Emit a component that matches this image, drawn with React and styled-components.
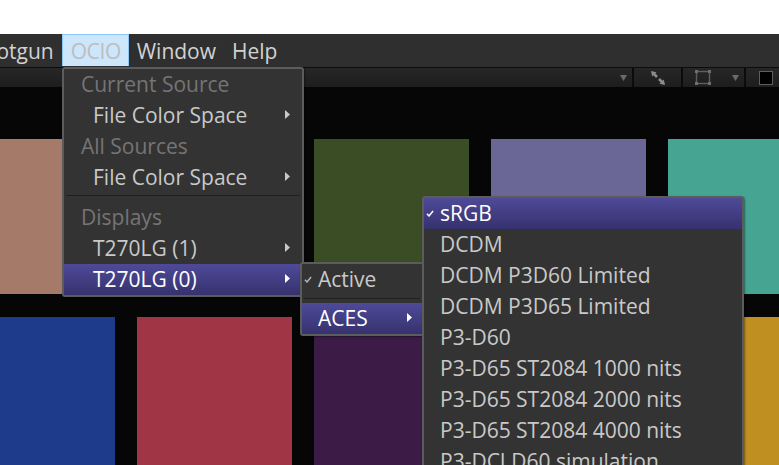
import React from "react";
import styled, { createGlobalStyle } from "styled-components";

const Global = createGlobalStyle`
  html, body { margin: 0; padding: 0; background: #fff; overflow: hidden; }
  #root { width: 779px; height: 465px; overflow: hidden; }
`;

const FONT = `"Open Sans", "Noto Sans", "Liberation Sans", sans-serif`;

const Page = styled.div`
  position: relative;
  width: 779px;
  height: 465px;
  overflow: hidden;
  padding-top: 34px;
  box-sizing: border-box;
  font-family: ${FONT};
  display: flex;
  flex-direction: column;
`;

const MenuBar = styled.div`
  height: 33px;
  flex: none;
  display: flex;
  align-items: stretch;
  background: #2f2f2f;
  border-bottom: 1px solid #0c0c0c;
  margin-left: -36px;
`;

const BarItem = styled.div`
  padding: 0 7px;
  font-size: 21px;
  line-height: 32px;
  color: ${(p) => (p.$open ? "#bdbdbd" : "#d2d2d2")};
  background: ${(p) => (p.$open ? "#cce6fb" : "transparent")};
  border: 1px solid ${(p) => (p.$open ? "#8fc6f4" : "transparent")};
  border-bottom: none;
  box-sizing: border-box;
  height: 32px;
  ${(p) => p.$open && "width: 67px; padding: 0 0 0 8px; letter-spacing: -0.4px;"}
`;

const Toolbar = styled.div`
  height: 19px;
  flex: none;
  display: flex;
  gap: 2px;
  background: #0b0b0b;
  justify-content: flex-end;
`;

const ToolCell = styled.div`
  width: ${(p) => p.$w}px;
  flex: ${(p) => (p.$grow ? "1" : "none")};
  background: linear-gradient(#272727, #1d1d1d);
  display: flex;
  align-items: center;
  justify-content: ${(p) => p.$justify || "center"};
  padding: 0 ${(p) => p.$right || 0}px 0 ${(p) => p.$left || 0}px;
  box-sizing: border-box;
`;

const Canvas = styled.div`
  flex: 1;
  background: #060606;
  padding: 52px 0 0;
  overflow: hidden;
`;

const Swatches = styled.div`
  display: grid;
  grid-template-columns: repeat(5, 155px);
  grid-auto-rows: 155px;
  column-gap: 22px;
  row-gap: 23px;
  margin-left: -40px;
  width: 900px;
`;

const Swatch = styled.div`
  background: ${(p) => p.$c};
`;

const Menu = styled.div`
  position: absolute;
  left: ${(p) => p.$x}px;
  top: ${(p) => p.$y}px;
  width: ${(p) => p.$w}px;
  box-sizing: border-box;
  background: #333333;
  border: 2px solid #5c5c5c;
  border-radius: 3px;
  box-shadow: 1px 1px 2px rgba(0, 0, 0, 0.4);
`;

const Row = styled.div`
  position: relative;
  height: 31px;
  line-height: 31px;
  font-size: 21px;
  white-space: nowrap;
  padding-left: ${(p) => p.$indent}px;
  color: ${(p) => (p.$dim ? "#757575" : p.$active ? "#ffffff" : "#c9c9c9")};
  background: ${(p) =>
    p.$active ? "linear-gradient(#4e4a98, #36326e)" : "transparent"};
`;

const Arrow = styled.span`
  position: absolute;
  right: ${(p) => p.$r}px;
  top: 10px;
  width: 5px;
  height: 9px;
  background: ${(p) => (p.$active ? "#fff" : "#c9c9c9")};
  clip-path: polygon(0 0, 100% 50%, 0 100%);
`;

const Check = styled.svg`
  position: absolute;
  left: 2px;
  top: 12px;
  width: 8px;
  height: 7px;
`;

const Separator = styled.div`
  height: 1px;
  background: #1f1f1f;
  margin: ${(p) => p.$m};
`;

const Tick = ({ color }) => (
  <Check viewBox="0 0 9 8">
    <path d="M1 4.2 L3.4 6.8 L8 1.2" fill="none" stroke={color} strokeWidth="1.7" />
  </Check>
);

const DropDown = () => (
  <svg width="7" height="6" viewBox="0 0 7 6">
    <path d="M0 0h7L3.5 6z" fill="#6a6a6a" />
  </svg>
);

const Expand = () => (
  <svg width="14" height="14" viewBox="0 0 14 14">
    <path d="M0 0l5.5 1.2L1.2 5.5zM14 14l-5.5-1.2 4.3-4.3z" fill="#8c8c8c" />
    <path d="M3 3l3 3M8 8l3 3" stroke="#8c8c8c" strokeWidth="2.6" />
  </svg>
);

const Frame = () => (
  <svg width="16" height="15" viewBox="0 0 16 15">
    <rect x="1.5" y="1.5" width="13" height="12" fill="none" stroke="#5e5e5e" strokeWidth="1.4" />
    <path d="M0 0h3v3H0zM13 0h3v3h-3zM0 12h3v3H0zM13 12h3v3h-3z" fill="#6e6e6e" />
  </svg>
);

const ColorBox = styled.div`
  flex: none;
  width: 14px;
  height: 14px;
  border: 1px solid #5e5e5e;
  background: #000;
  box-sizing: border-box;
`;

const colors = [
  "#a67a68", "#a0a0a0", "#3b4d24", "#6a6695", "#45a592",
  "#1d3a8b", "#a03545", "#3c1c47", "#555555", "#bf8f22",
];

const spaces = [
  "DCDM",
  "DCDM P3D60 Limited",
  "DCDM P3D65 Limited",
  "P3-D60",
  "P3-D65 ST2084 1000 nits",
  "P3-D65 ST2084 2000 nits",
  "P3-D65 ST2084 4000 nits",
  "P3-DCI D60 simulation",
];

export default function App() {
  return (
    <Page>
      <Global />
      <MenuBar>
        <BarItem>Shotgun</BarItem>
        <BarItem $open>OCIO</BarItem>
        <BarItem>Window</BarItem>
        <BarItem>Help</BarItem>
      </MenuBar>
      <Toolbar>
        <ToolCell $grow $justify="flex-end" $right={5}><DropDown /></ToolCell>
        <ToolCell $w={47}><Expand /></ToolCell>
        <ToolCell $w={61} $justify="space-between" $left={12} $right={5}><Frame /><DropDown /></ToolCell>
        <ToolCell $w={33} $justify="flex-start" $left={13}><ColorBox /></ToolCell>
      </Toolbar>
      <Canvas>
        <Swatches>
          {colors.map((c) => (
            <Swatch key={c} $c={c} />
          ))}
        </Swatches>
      </Canvas>

      <Menu $x={62} $y={67} $w={242}>
        <Row $dim $indent={17}>Current Source</Row>
        <Row $indent={29}>File Color Space<Arrow $r={12} /></Row>
        <Row $dim $indent={17}>All Sources</Row>
        <Row $indent={29}>File Color Space<Arrow $r={12} /></Row>
        <Separator $m="2px 2px 6px" />
        <Row $dim $indent={17}>Displays</Row>
        <Row $indent={29}>T270LG (1)<Arrow $r={12} /></Row>
        <Row $active $indent={29}>T270LG (0)<Arrow $r={12} $active /></Row>
      </Menu>

      <Menu $x={300} $y={262} $w={124}>
        <Row $indent={16}><Tick color="#b5b5b5" />Active</Row>
        <Separator $m="3px 2px 4px" />
        <Row $active $indent={16}>ACES<Arrow $r={10} $active /></Row>
      </Menu>

      <Menu $x={422} $y={196} $w={322}>
        <Row $active $indent={16}><Tick color="#ffffff" />sRGB</Row>
        {spaces.map((s) => (
          <Row key={s} $indent={16}>{s}</Row>
        ))}
      </Menu>
    </Page>
  );
}
